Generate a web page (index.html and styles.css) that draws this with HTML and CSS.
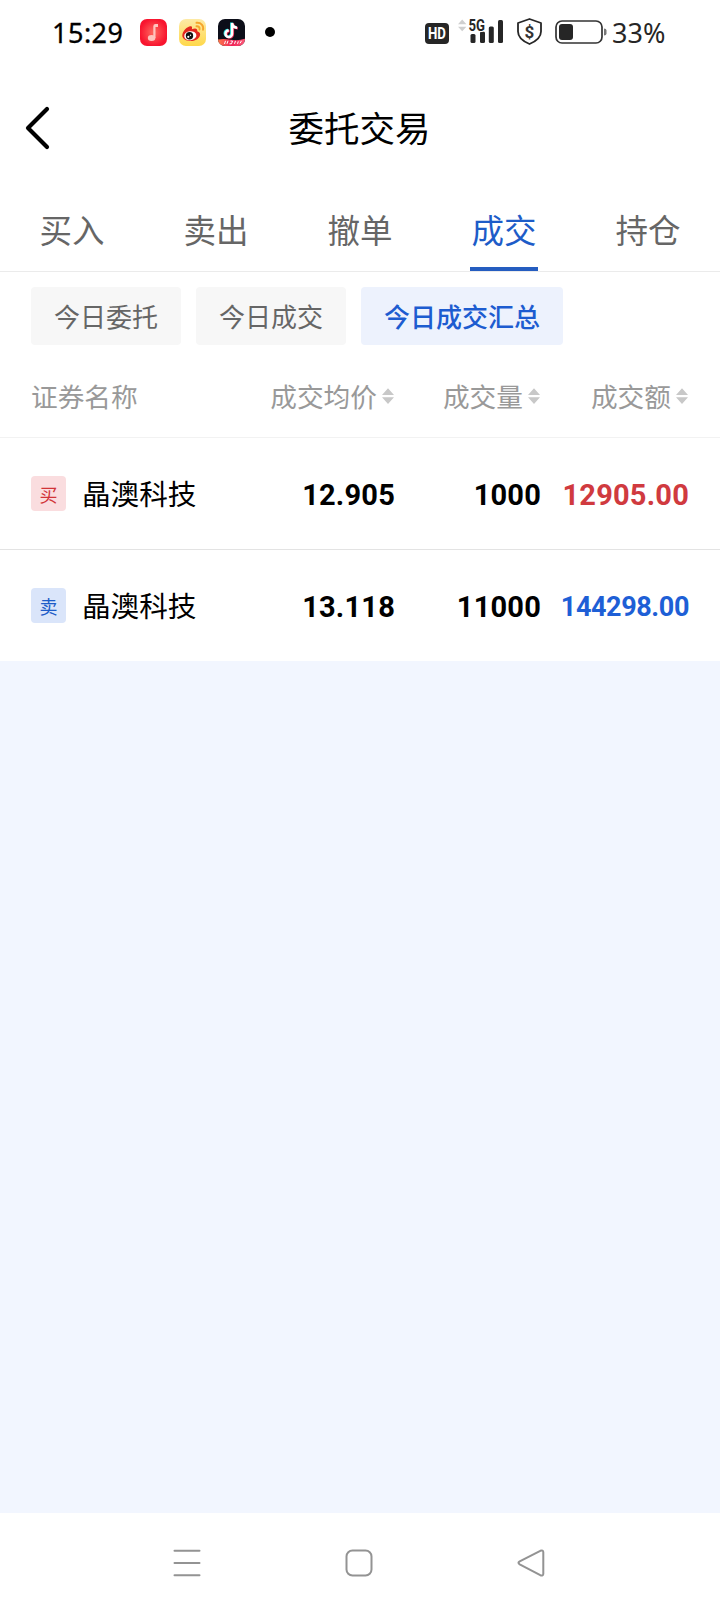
FILE: index.html
```html
<!DOCTYPE html>
<html lang="zh-CN">
<head>
<meta charset="utf-8">
<title>委托交易</title>
<link rel="stylesheet" href="styles.css">
</head>
<body>
<div class="screen">
  <div class="status">
    <span class="time">15:29</span>
    <svg class="apps" width="140" height="30" viewBox="0 0 140 30">
      <defs>
        <radialGradient id="music"><stop offset="0" stop-color="#ff6a60"/><stop offset="1" stop-color="#f8152f"/></radialGradient>
        <linearGradient id="weibo" x1="0" y1="0" x2="0" y2="1"><stop offset="0" stop-color="#fdeaa6"/><stop offset="1" stop-color="#ffd84a"/></linearGradient>
        <linearGradient id="promo"><stop offset="0" stop-color="#ff7a4a"/><stop offset=".5" stop-color="#ee2358"/><stop offset="1" stop-color="#ff5a78"/></linearGradient>
        <clipPath id="tile"><rect x="79" y="1" width="27" height="27" rx="7"/></clipPath>
      </defs>
      <rect x="1" y="1" width="27" height="27" rx="7" fill="url(#music)"/>
      <path d="M14.3 20V8.2q0-2.2 2.2-2.2H19v3h-2.5v11" fill="#ffc4be"/>
      <ellipse cx="12.6" cy="20" rx="3.8" ry="3" fill="#ffc4be"/>
      <rect x="40" y="1" width="27" height="27" rx="7" fill="url(#weibo)"/>
      <path d="M43.3 17.5c0-4 5-9.2 8.200-9.200 2 0 1.700 2 1.300 3 2.800-1.300 6-1.500 5.500 2 2.300.8 3.400 2.200 2.600 4.500-1.200 3.600-5.200 5.200-9.300 5.200-4.500 0-8.300-2.200-8.300-5.500z" fill="#e3261e"/>
      <ellipse cx="51.300" cy="17.700" rx="6.100" ry="4.500" fill="#fff" transform="rotate(-7 51.300 17.700)"/>
      <circle cx="50.500" cy="17.800" r="3.700" fill="#111"/>
      <circle cx="49.300" cy="18.800" r="1.100" fill="#fff"/><circle cx="51.500" cy="17.200" r=".7" fill="#fff"/>
      <path d="M57.500 4.800c4.500-.5 7.500 2.800 6.500 7M57.500 8.300c2-.3 3.600 1.200 3 3.200" fill="none" stroke="#f6a52b" stroke-width="1.900" stroke-linecap="round"/>
      <g clip-path="url(#tile)">
        <rect x="79" y="1" width="27" height="27" fill="#0c0e19"/>
        <g fill="none" stroke-width="2.400">
          <path d="M92.300 4.500v10.800a3.300 3.300 0 1 1-3.300-3.300M92.300 4.500c.3 2.800 2.200 4.600 5 4.700" stroke="#25e4e4"/>
          <path d="M93.900 5.500v10.800a3.300 3.300 0 1 1-3.300-3.300M93.900 5.500c.3 2.800 2.200 4.600 5 4.700" stroke="#f22f58"/>
          <path d="M93.100 5v10.800a3.300 3.300 0 1 1-3.300-3.300M93.100 5c.3 2.800 2.200 4.600 5 4.700" stroke="#fff"/>
        </g>
        <path d="M79 21.500q6-1 13 .3t14-1V28H79z" fill="url(#promo)"/>
        <path d="M85.500 26l1-3.200m1.500 3l1-3m1.500 3h2l1-2.800h-2m4 2.800l1-3m2 3l.8-2.500m1.700 2l1.500-2.500" stroke="#fff" stroke-width="1" fill="none"/>
      </g>
      <circle cx="131" cy="14" r="5" fill="#000"/>
    </svg>
    <svg class="signals" width="184" height="34" viewBox="0 -4 184 34">
      <rect x="2" y="6" width="24" height="21" rx="4" fill="#262626"/>
      <text x="14" y="22" class="hd" textLength="18" lengthAdjust="spacingAndGlyphs">HD</text>
      <path d="M35 10.200l4.200-4.700 4.200 4.700zM35 12.800h8.400l-4.200 4.500z" transform="translate(0 -3)" fill="#cfcfcf"/>
      <g fill="#262626"><rect x="47.500" y="17" width="5" height="9" rx="1.500"/><rect x="57" y="14.500" width="5" height="11.500" rx="1.500"/><rect x="65.800" y="9.500" width="5" height="16.500" rx="1.500"/><rect x="75" y="3" width="5" height="23" rx="1.500"/></g>
      <text x="45.500" y="13.500" class="five" textLength="16.500" lengthAdjust="spacingAndGlyphs">5G</text>
      <path d="M106.500 2l11.500 4v8.500c0 6-5 9.800-11.500 12.500C100 24.300 95 20.500 95 14.500V6z" fill="none" stroke="#262626" stroke-width="1.800" stroke-linejoin="round"/>
      <text x="106.500" y="20.600" class="dollar">$</text>
      <rect x="133" y="4" width="46" height="22" rx="6" fill="none" stroke="#333" stroke-width="1.700"/>
      <rect x="136" y="7" width="14" height="16" rx="3" fill="#262626"/>
      <path d="M181 11.500q2.500 0 2.500 2v3q0 2-2.500 2z" fill="#777"/>
    </svg>
    <span class="percent">33%</span>
  </div>

  <header class="titlebar">
    <svg class="back" width="26" height="44" viewBox="0 0 26 44"><path d="M22 3L3 22l19 19" fill="none" stroke="#000" stroke-width="4.200" stroke-linecap="round" stroke-linejoin="round"/></svg>
    <h1 class="title">委托交易</h1>
  </header>

  <nav class="tabs">
    <span class="tab">买入</span>
    <span class="tab">卖出</span>
    <span class="tab">撤单</span>
    <span class="tab active">成交</span>
    <span class="tab">持仓</span>
  </nav>

  <div class="chips">
    <span class="chip">今日委托</span>
    <span class="chip">今日成交</span>
    <span class="chip selected">今日成交汇总</span>
  </div>

  <div class="columns">
    <span class="col">证券名称</span>
    <span class="col num">成交均价<svg class="sort" width="12" height="16" viewBox="0 0 12 16"><path d="M0 7L6 .2 12 7zM0 9.200h12L6 16z"/></svg></span>
    <span class="col num">成交量<svg class="sort" width="12" height="16" viewBox="0 0 12 16"><path d="M0 7L6 .2 12 7zM0 9.200h12L6 16z"/></svg></span>
    <span class="col num">成交额<svg class="sort" width="12" height="16" viewBox="0 0 12 16"><path d="M0 7L6 .2 12 7zM0 9.200h12L6 16z"/></svg></span>
  </div>

  <div class="row">
    <span class="stock"><span class="badge buy">买</span>晶澳科技</span>
    <span class="value">12.905</span>
    <span class="value">1000</span>
    <span class="value red">12905.00</span>
  </div>
  <div class="row">
    <span class="stock"><span class="badge sell">卖</span>晶澳科技</span>
    <span class="value">13.118</span>
    <span class="value">11000</span>
    <span class="value blue">144298.00</span>
  </div>

  <main class="blank"></main>

  <div class="sysnav">
    <svg width="28" height="28" viewBox="0 0 28 28"><path d="M1.500 1.700h25M1.500 14h25M1.500 26.300h25"/></svg>
    <svg width="28" height="28" viewBox="0 0 28 28"><rect x="1.500" y="1.500" width="25" height="25" rx="6"/></svg>
    <svg width="28" height="28" viewBox="0 0 28 28"><path d="M23.300 1.800L2.700 12.300q-2.500 1.500 0 3L23.300 26.200q3 1 3-1.500V3.300q0-2.500-3-1.500z"/></svg>
  </div>
</div>
</body>
</html>
```
FILE: styles.css
```css
* { box-sizing: border-box; }
body { margin: 0; background: #fff; font-family: "Noto Sans CJK SC", sans-serif; }
.screen { display: flex; flex-direction: column; width: 720px; height: 1612px; overflow: hidden; }

.status { display: flex; align-items: flex-start; height: 64px; padding: 18px 52px 0; font-family: "Noto Sans", sans-serif; }
.time { width: 87px; font-size: 27px; line-height: 29px; font-weight: 400; letter-spacing: .5px; color: #000; -webkit-text-stroke: .3px #000; white-space: nowrap; }
.apps { flex: none; }
.signals { flex: none; margin: -5px 0 0 144px; }
.percent { margin-left: 5px; line-height: 30px; font-size: 27px; letter-spacing: 0; color: #262626; }
.hd { font: 700 16px Roboto, sans-serif; fill: #fff; text-anchor: middle; }
.five { font: 700 16.5px Roboto, sans-serif; fill: #262626; stroke: #fff; stroke-width: 2px; paint-order: stroke; }
.dollar { font: 700 17px Roboto, sans-serif; fill: #333; text-anchor: middle; }

.titlebar { display: grid; grid-template-columns: 26px 1fr 26px; align-items: center; height: 128px; padding: 0 25px; }
.title { margin: -2px 1px 0 0; font-size: 35.5px; line-height: 52px; font-weight: 400; text-align: center; color: #000; }

.tabs { display: grid; grid-template-columns: repeat(5, 1fr); justify-items: center; height: 80px; border-bottom: 1px solid #ebebeb; }
.tab { height: 79px; padding: 0 1px; line-height: 73px; font-size: 32.5px; color: #666; }
.active { color: #1d5cc8; border-bottom: 4px solid #255dc0; }

.chips { display: flex; gap: 15px; padding: 15px 31px 0; height: 73px; }
.chip { height: 58px; padding: 0 23px; border-radius: 4px; background: #f7f7f7; color: #666; font-size: 26px; line-height: 57px; }
.selected { background: #edf2fd; color: #1d5cd0; font-weight: 500; }

.columns, .row { display: grid; grid-template-columns: 164px 200px 146px 148px; align-items: center; padding: 0 31px; }
.columns { height: 93px; border-bottom: 1px solid #f2f2f2; font-size: 26.7px; color: #999; }
.col { line-height: 40px; white-space: nowrap; margin-top: 9px; }
.num { display: flex; align-items: center; justify-content: flex-end; gap: 5px; padding-right: 1px; }
.sort { margin-top: 1px; fill: #c8c8c8; }

.row { height: 112px; border-bottom: 1px solid #e3e3e3; }
.row + .row { height: 111px; border-bottom: 0; }
.stock { display: flex; align-items: center; font-size: 28.6px; line-height: 42px; white-space: nowrap; color: #000; margin-top: -1px; }
.badge { flex: none; width: 35px; height: 35px; margin: 1px 16px 0 0; border-radius: 4px; font-size: 18px; line-height: 36px; text-align: center; }
.buy { background: #fadddf; color: #d13438; }
.sell { background: #dae5fa; color: #1d5cc8; }
.value { margin-top: 2px; font: 700 29px/40px Roboto, sans-serif; letter-spacing: .2px; text-align: right; white-space: nowrap; color: #000; }
.value.red { color: #d03a3f; }
.value.blue { color: #1e5fd6; font-size: 27px; letter-spacing: -.4px; }

.blank { flex: 1; background: #f2f6ff; }
.sysnav { display: flex; gap: 144px; height: 99px; padding: 36px 0 0 173px; }
.sysnav svg { fill: none; stroke: #939393; stroke-width: 2; stroke-linecap: round; stroke-linejoin: round; }
```
